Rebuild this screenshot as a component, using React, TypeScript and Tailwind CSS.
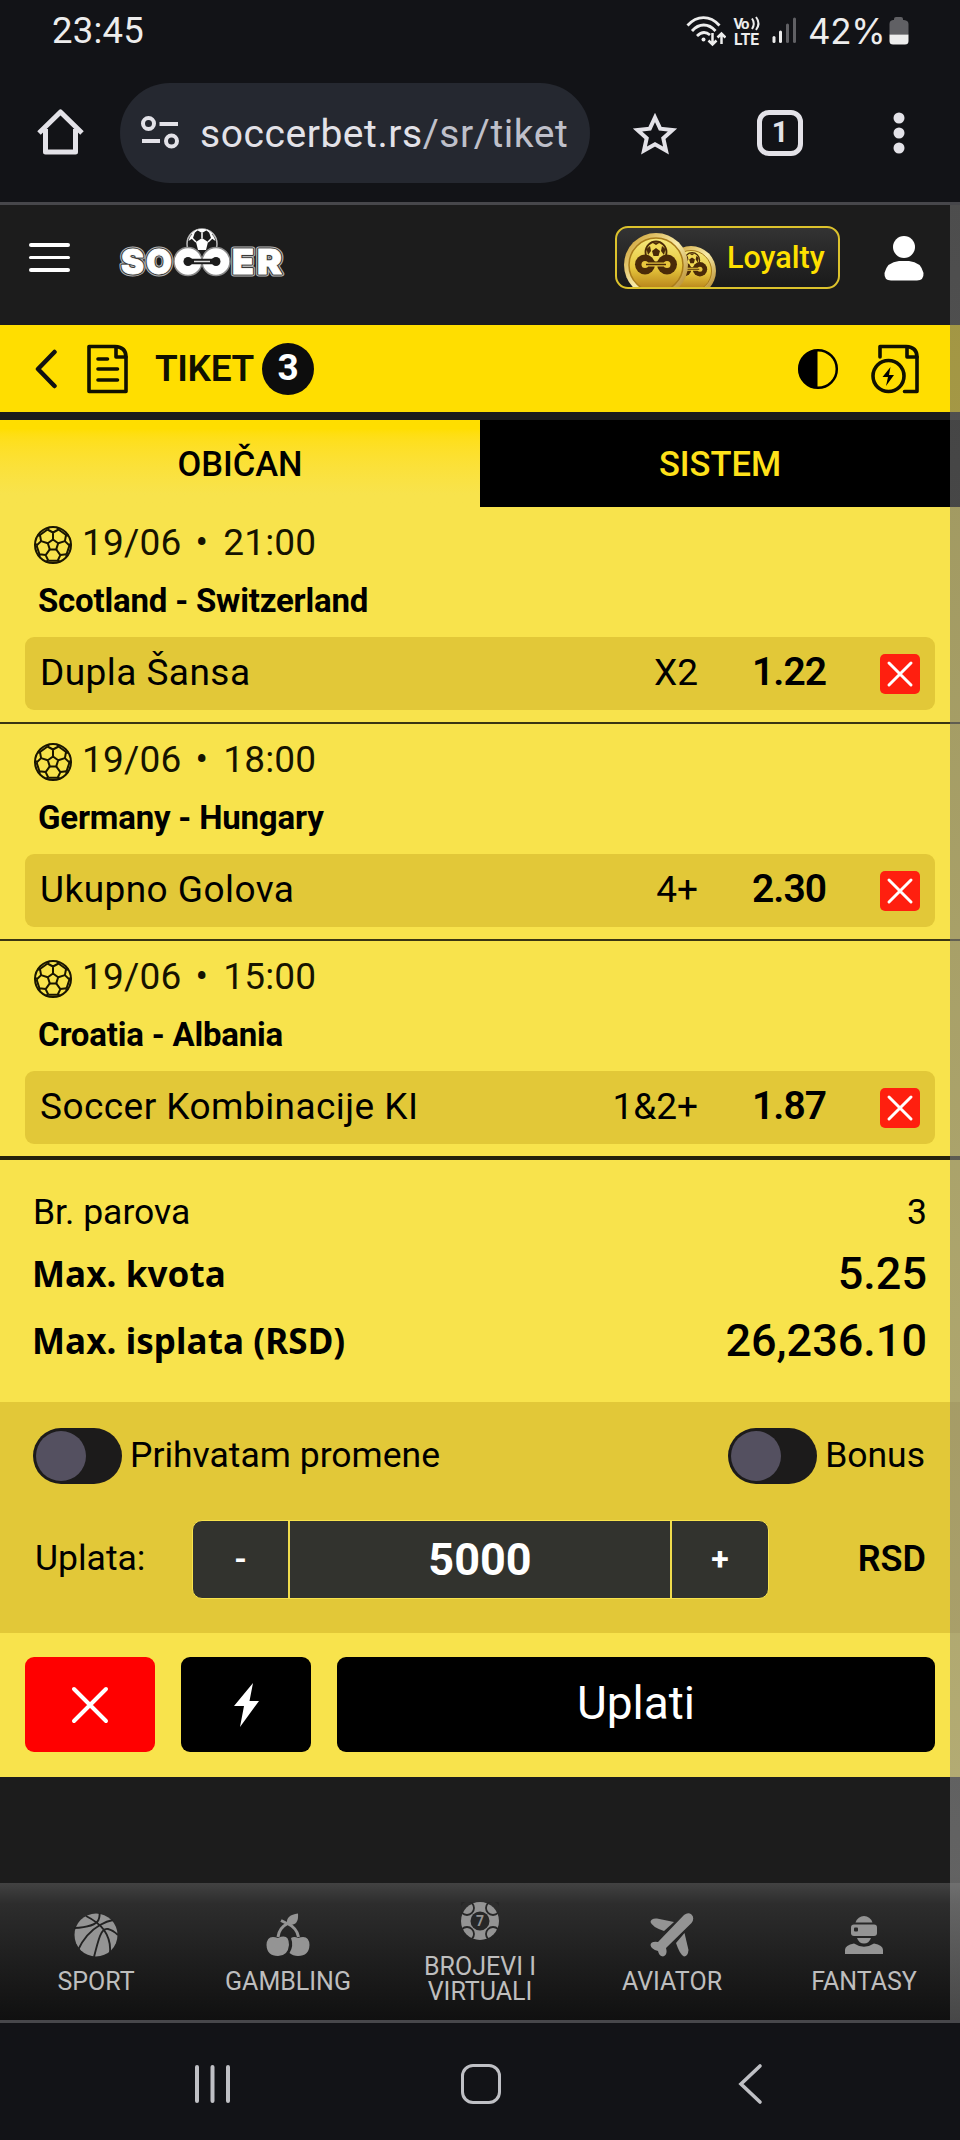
import { useState } from 'react';
import type { ReactNode } from 'react';

interface Bet {
  id: number;
  date: string;
  time: string;
  match: string;
  market: string;
  pick: string;
  odd: string;
}

const bets: Bet[] = [
  { id: 1, date: '19/06', time: '21:00', match: 'Scotland - Switzerland', market: 'Dupla Šansa', pick: 'X2', odd: '1.22' },
  { id: 2, date: '19/06', time: '18:00', match: 'Germany - Hungary', market: 'Ukupno Golova', pick: '4+', odd: '2.30' },
  { id: 3, date: '19/06', time: '15:00', match: 'Croatia - Albania', market: 'Soccer Kombinacije KI', pick: '1&2+', odd: '1.87' },
];

function StatusBar() {
  return (
    <div className="flex h-[62px] items-center justify-between pl-[52px] pr-[51px] text-[#ededed]">
      <span className="text-[36.5px] leading-none tracking-[0.2px]">23:45</span>
      <div className="flex items-center">
        <svg width="40" height="32" viewBox="0 0 40 32" fill="none" stroke="#ededed" strokeWidth="2.8">
          <path d="M1.5 10.5C11 0 24 0 33.5 10.5" />
          <path d="M6 16C13 8 22.5 8 29.5 16" />
          <path d="M11 21C15.5 16.5 20 16.5 24 20" />
          <circle cx="17.5" cy="24.500" r="2" fill="#ededed" stroke="none" />
          <path d="M26.5 18V29M22.5 25.5L26.5 29.5L30.5 25.5M35.5 29V19M31.5 22.5L35.5 18.5L39.5 22.5" strokeWidth="2.5" />
        </svg>
        <svg className="ml-[7px] overflow-visible" width="28" height="36" viewBox="0 0 28 36" fill="#ededed" fontFamily="Roboto, sans-serif" fontWeight="700">
          <text x="0.5" y="16" fontSize="15" textLength="16">Vo</text>
          <path d="M19 5.5Q22.5 10.500 19 16M23 4Q28 10.500 23 17" fill="none" stroke="#ededed" strokeWidth="2" />
          <text x="1" y="31.500" fontSize="16" textLength="25" lengthAdjust="spacingAndGlyphs">LTE</text>
        </svg>
        <svg className="ml-[11px]" width="26" height="28" viewBox="0 0 26 28">
          <rect x="0.5" y="19" width="3" height="7" rx="1.5" fill="#ededed" />
          <rect x="7" y="13.5" width="3" height="12.5" rx="1.5" fill="#ededed" />
          <rect x="14" y="6.5" width="3" height="19.5" rx="1.5" fill="#606064" />
          <rect x="21" y="0.5" width="3" height="25.5" rx="1.5" fill="#606064" />
        </svg>
        <span className="ml-[10px] w-[79px] whitespace-nowrap font-['Inter'] text-[35px] leading-none tracking-[-0.4px]">42%</span>
        <svg className="ml-[2px]" width="20" height="28" viewBox="0 0 20 28">
          <path d="M5 3V2Q5 0 7 0H12Q14 0 14 2V3H15Q19.5 3.5 19.5 7V17.5H0.5V7Q0.5 3.5 4 3Z" fill="#606064" />
          <path d="M0.5 17.5H19.5V24Q19.5 27.5 16 27.5H4Q0.5 27.5 0.5 24Z" fill="#ededed" />
        </svg>
      </div>
    </div>
  );
}

function BrowserBar() {
  return (
    <div className="flex h-[140px] items-center pl-[36px] pt-px text-[#e3e2e8]">
      <svg className="mb-[3px]" width="48" height="48" viewBox="0 0 48 48" fill="none" stroke="#e3e2e8" strokeWidth="5" strokeLinejoin="round">
        <path d="M3 26L24.5 5L46 26" />
        <path d="M9.5 22V45H39.5V22" />
      </svg>
      <div className="ml-[36px] flex h-[100px] w-[470px] items-center rounded-full bg-[#252830] pl-[21px]">
        <svg width="38" height="34" viewBox="0 0 38 34" fill="none" stroke="#e3e2e8" strokeWidth="4">
          <circle cx="7.5" cy="7.5" r="5.5" />
          <path d="M18.5 8H37" />
          <path d="M1 25H19" />
          <circle cx="30.5" cy="25" r="5.5" />
        </svg>
        <span className="ml-[21px] mt-[4px] whitespace-nowrap text-[39px] leading-none tracking-[0.55px]">
          soccerbet.rs<span className="text-[#bfc0ca]">/sr/tiket</span>
        </span>
      </div>
      <svg className="ml-[42px] mt-[3px]" width="46" height="44" viewBox="0 0 46 44" fill="none" stroke="#e3e2e8" strokeWidth="4">
        <path d="M23 5.5L28.2 16.7L40.5 18L31.3 26.3L34 38.5L23 32.2L12 38.5L14.7 26.3L5.5 18L17.8 16.7Z" />
      </svg>
      <div className="ml-[79px] flex h-[46px] w-[46px] items-center justify-center rounded-[12px] border-[5px] border-[#e3e2e8] text-[29px] font-bold leading-none">
        1
      </div>
      <svg className="ml-[90px]" width="12" height="44" viewBox="0 0 12 44" fill="#e3e2e8">
        <circle cx="6" cy="7" r="5.5" />
        <circle cx="6" cy="22" r="5.5" />
        <circle cx="6" cy="37" r="5.5" />
      </svg>
    </div>
  );
}

function Logo() {
  const letters = (
    <>
      <text x="7" y="49" textLength="23" lengthAdjust="spacingAndGlyphs">S</text>
      <text x="32" y="49" textLength="26" lengthAdjust="spacingAndGlyphs">O</text>
      <text x="118" y="49" textLength="22" lengthAdjust="spacingAndGlyphs">E</text>
      <text x="143" y="49" textLength="25" lengthAdjust="spacingAndGlyphs">R</text>
    </>
  );
  return (
    <svg className="mb-[9px] ml-[44px]" width="176" height="56" viewBox="0 0 176 56" fontFamily="Inter, sans-serif" fontWeight="900" fontSize="34">
      <circle cx="88" cy="19" r="15" fill="#1c1c1c" stroke="#bdbdbd" strokeWidth="1.5" />
      <path d="M88 13L94 17L92 25H84L82 17ZM83 5L88 8L93 5L90 4H86ZM74.5 16L79 13L81 7Q76 10 74.5 16ZM101.5 16L97 13L95 7Q100 10 101.5 16Z" fill="#fff" />
      <path d="M88 8V13M82 17L78 13M94 17L98 13M83 5L78 9M93 5L98 9" stroke="#fff" strokeWidth="1.5" />
      <g fill="#b5b5b5" stroke="#b5b5b5" strokeWidth="5" strokeLinejoin="round">{letters}</g>
      <g fill="#3a3a3a" stroke="#3a3a3a" strokeWidth="3" strokeLinejoin="round">{letters}</g>
      <g fill="#fff" stroke="#fff" strokeWidth="0.8">{letters}</g>
      <g fill="#fff" stroke="#8a8a8a" strokeWidth="1.5">
        <circle cx="74" cy="36.5" r="14" />
        <circle cx="102" cy="36.5" r="14" />
      </g>
      <circle cx="74" cy="36.5" r="4.5" fill="#1c1c1c" />
      <circle cx="102" cy="36.5" r="4.5" fill="#1c1c1c" />
      <path d="M74 36.5H102" stroke="#1c1c1c" strokeWidth="5.5" />
      <path d="M80 36.5H96" stroke="#ddd" strokeWidth="1.5" />
    </svg>
  );
}

function CoinMark() {
  return (
    <>
      <circle cx="32" cy="24" r="10.5" fill="#f0d955" stroke="#4a2a08" strokeWidth="1.8" />
      <path d="M32 20L36 23L34.5 28H29.5L28 23ZM22.5 21L26 18L27 23L24 27ZM41.5 21L38 18L37 23L40 27ZM28 14.5H36L32 17Z" fill="#4a2a08" />
      <circle cx="21" cy="36.5" r="10" fill="#4a2a08" />
      <circle cx="43" cy="36.5" r="10" fill="#4a2a08" />
      <circle cx="21" cy="36.5" r="3.5" fill="#e8c63e" />
      <circle cx="43" cy="36.5" r="3.5" fill="#e8c63e" />
      <path d="M21 36.5H43" stroke="#e8c63e" strokeWidth="4" />
      <path d="M22 36.5H42" stroke="#4a2a08" strokeWidth="1.3" />
    </>
  );
}

function Coins() {
  return (
    <svg width="96" height="59" viewBox="0 0 96 59">
      <defs>
        <linearGradient id="rim" x1="0" y1="0" x2="1" y2="1">
          <stop offset="0" stopColor="#c79522" />
          <stop offset="0.5" stopColor="#f8ecaa" />
          <stop offset="1" stopColor="#a8740e" />
        </linearGradient>
        <linearGradient id="face" x1="0" y1="0" x2="0" y2="1">
          <stop offset="0" stopColor="#f6e97c" />
          <stop offset="0.55" stopColor="#e6c63c" />
          <stop offset="1" stopColor="#b07814" />
        </linearGradient>
      </defs>
      <circle cx="67" cy="43" r="25" fill="url(#rim)" />
      <circle cx="67" cy="43" r="20.5" fill="url(#face)" stroke="#a97c1a" strokeWidth="1" />
      <g transform="translate(45 15) scale(0.72)">
        <CoinMark />
      </g>
      <circle cx="32" cy="37" r="32" fill="url(#rim)" />
      <circle cx="32" cy="37" r="27" fill="url(#face)" stroke="#a97c1a" strokeWidth="1.5" />
      <CoinMark />
    </svg>
  );
}

function Header() {
  return (
    <header className="flex h-[120px] items-center bg-[#1c1c1c] pb-[15px] pl-[29px] pr-[36px]">
      <button className="flex flex-col gap-[9px]">
        <span className="h-[3.5px] w-[41px] rounded-full bg-white" />
        <span className="h-[3.5px] w-[41px] rounded-full bg-white" />
        <span className="h-[3.5px] w-[41px] rounded-full bg-white" />
      </button>
      <Logo />
      <button className="ml-auto flex h-[63px] w-[225px] items-center overflow-hidden rounded-[13px] border-2 border-[#dcc22c] bg-linear-to-b from-[#333333] to-[#1a1a1a] pl-[7px]">
        <Coins />
        <span className="ml-[7px] mt-[2px] text-[30.5px] font-medium leading-none text-[#ffe000]">Loyalty</span>
      </button>
      <svg className="ml-[44px]" width="40" height="46" viewBox="0 0 40 46" fill="#fff">
        <circle cx="20" cy="12" r="11" />
        <path d="M15 26H25Q37 27 39.5 38Q40 45.5 33 45.5H7Q0 45.5 0.5 38Q3 27 15 26Z" />
      </svg>
    </header>
  );
}

function TicketBar() {
  return (
    <div className="flex h-[87px] items-center bg-[#ffde00] pl-[34px] pr-[40px]">
      <svg width="24" height="40" viewBox="0 0 24 40" fill="none" stroke="#111" strokeWidth="4.5" strokeLinecap="round" strokeLinejoin="round">
        <path d="M20.5 3L4 20L20.5 37" />
      </svg>
      <svg className="ml-[28px]" width="43" height="50" viewBox="0 0 43 50" fill="none" stroke="#111100" strokeWidth="3.6" strokeLinecap="round" strokeLinejoin="round">
        <path d="M3 2.5H29Q40 3 40 13V47.5H3Z" />
        <path d="M30 3V13H40M12 15H21.5M12 25H31.5M12 36H31.5" />
      </svg>
      <span className="ml-[26px] w-[99px] text-[37px] font-semibold leading-none tracking-[-0.4px] text-[#111100]">TIKET</span>
      <span className="ml-[8px] flex h-[52px] w-[52px] items-center justify-center rounded-full bg-[#0d0d0d] pb-[2px] text-[37px] font-bold leading-none text-white">
        {bets.length}
      </span>
      <svg className="ml-auto" width="42" height="42" viewBox="0 0 42 42">
        <circle cx="21" cy="21" r="18.8" fill="none" stroke="#000" strokeWidth="2.5" />
        <path d="M20.5 2A19 19 0 0 0 20.5 40Z" fill="#000" />
      </svg>
      <svg className="ml-[31px]" width="50" height="50" viewBox="0 0 50 50" fill="none" stroke="#111100" strokeWidth="3.6" strokeLinecap="round" strokeLinejoin="round">
        <path d="M10 13V2.5H36Q47 3 47 13V47.5H34.5" />
        <path d="M37 3V13H47" />
        <circle cx="18.5" cy="32" r="15.5" />
        <path d="M20.5 23L12.5 33H18L16 42L24 31H19Z" fill="#000" stroke="none" />
      </svg>
    </div>
  );
}

function BallIcon() {
  return (
    <svg className="mt-[5px]" width="40" height="40" viewBox="0 0 40 40" fill="none" stroke="#1a1600" strokeWidth="2" strokeLinejoin="round">
      <circle cx="20" cy="20" r="18" />
      <path d="M20 14.5L25.2 18.3L23.2 24.4H16.8L14.8 18.3Z" />
      {[0, 72, 144, 216, 288].map((angle) => (
        <path
          key={angle}
          transform={`rotate(${angle} 20 20)`}
          d="M20 14.5V7.5M14.5 4.500L20 7.5L25.5 4.500L33.100 10M25.5 4.500L24 2.5M14.5 4.500L16 2.5"
        />
      ))}
    </svg>
  );
}

function BetRow({ bet, last, onRemove }: { bet: Bet; last: boolean; onRemove: () => void }) {
  return (
    <div className={`px-[25px] pt-[11px] ${last ? 'h-[219px] border-b-4 border-[#25220a]' : 'h-[217px] border-b-2 border-[#3a3512]'}`}>
      <div className="flex h-[48px] items-center pl-[8px] text-[37px] leading-none tracking-[0.2px] text-[#161300]">
        <BallIcon />
        <span className="ml-[9px]">{bet.date}</span>
        <span className="ml-[14px] mr-[15px]">•</span>
        <span>{bet.time}</span>
      </div>
      <div className="mt-[10px] flex h-[48px] items-center pl-[13px] text-[33px] font-bold leading-none tracking-[-0.2px]">{bet.match}</div>
      <div className="mt-[13px] flex h-[73px] items-center rounded-[9px] bg-[#e2c838] pl-[15px] pr-[15px] text-[37px] leading-none">
        <span className="mb-[2px] grow tracking-[0.45px]">{bet.market}</span>
        <span className="mb-[2px]">{bet.pick}</span>
        <span className="mb-[2px] w-[129px] pr-px text-right text-[39px] font-semibold tracking-[-1px]">{bet.odd}</span>
        <button onClick={onRemove} className="ml-[53px] flex h-[40px] w-[40px] items-center justify-center rounded-[5px] bg-[#ff1f0f]">
          <svg width="28" height="28" viewBox="0 0 28 28" stroke="#fff" strokeWidth="3" strokeLinecap="round">
            <path d="M3 3L25 25M25 3L3 25" />
          </svg>
        </button>
      </div>
    </div>
  );
}

function Toggle({ label }: { label: string }) {
  const [on, setOn] = useState(false);
  return (
    <label className="flex items-center text-[35.5px] leading-none">
      <button
        onClick={() => setOn(!on)}
        className={`mr-[8px] flex h-[56px] w-[89px] items-center rounded-full bg-[#1c1b1b] px-[3px] ${on ? 'justify-end' : 'justify-start'}`}
      >
        <span className="h-[50px] w-[50px] rounded-full bg-[#545060]" />
      </button>
      {label}
    </label>
  );
}

function NavItem({ label, children }: { label: ReactNode; children: ReactNode }) {
  return (
    <div className="flex w-[192px] flex-col items-center justify-center pt-[3px] text-center text-[25px] leading-[25px] text-[#bebebe]">
      {children}
      {label}
    </div>
  );
}

function BottomNav() {
  return (
    <nav className="flex h-[137px] bg-linear-to-b from-[#424242] via-[#2d2d2d] via-15% to-[#101010]">
      <NavItem label="SPORT">
        <svg className="mb-[12px]" width="44" height="44" viewBox="0 0 44 44" fill="none" stroke="#222" strokeWidth="1.9">
          <circle cx="22" cy="22" r="21.5" fill="#949494" stroke="none" />
          <path d="M12 3Q24 9 30 17Q37 27 36 39M0 15Q21 14 24.5 7Q26 3 25.5 0M4 37Q12 20 26 12Q33 8 39 7M20 44Q24 28 26 23Q29 15 34 16Q39 17 44 22" />
        </svg>
      </NavItem>
      <NavItem label="GAMBLING">
        <svg className="mb-[12px]" width="44" height="44" viewBox="0 0 44 44" fill="#949494">
          <path d="M12 24Q13 15 21.5 10.5Q31 15 32.5 24M15 7.5L22 11" fill="none" stroke="#949494" strokeWidth="3" />
          <path d="M21 10Q20 2 32 0.5Q33 12 24 12Z" />
          <path d="M12 25Q23 20 23 32Q22 43 12 43Q1 43 0.5 32Q1 21 12 25Z" />
          <path d="M25 25Q28 33 23.5 40Q27 43 32 43Q43 43 43.5 32Q43 21 32 25Q28 23 25 25Z" />
        </svg>
      </NavItem>
      <NavItem label={<>BROJEVI I<br />VIRTUALI</>}>
        <svg className="mb-[14px]" width="38" height="38" viewBox="0 0 38 38">
          <circle cx="19" cy="19" r="19" fill="#949494" />
          <circle cx="19" cy="19" r="9.5" fill="#272727" />
          <g fill="none" stroke="#272727" strokeWidth="1.8">
            <circle cx="6" cy="6" r="7" />
            <circle cx="32" cy="6" r="7" />
            <circle cx="6" cy="32" r="7" />
            <circle cx="32" cy="32" r="7" />
          </g>
          <text x="19" y="24" fontSize="14" fontWeight="700" textAnchor="middle" fill="#949494">7</text>
        </svg>
      </NavItem>
      <NavItem label="AVIATOR">
        <svg className="mb-[12px]" width="44" height="44" viewBox="0 0 44 44" fill="#949494">
          <path d="M34 2Q38 -1 41.5 1.5Q45 5 41.5 10L16 35Q18 42 13 43.5Q9 43 8 38Q1 36 0.5 32Q1 28 8 29Z" />
          <path d="M24 9L14 18Q2 14 0.5 9Q1 5 7 5.5Z" />
          <path d="M34.5 20L26 30Q30 42 34 43.5Q38 43 38.5 37Z" />
        </svg>
      </NavItem>
      <NavItem label="FANTASY">
        <svg className="mb-[12px]" width="40" height="44" viewBox="0 0 40 44" fill="#949494">
          <path d="M11.5 9.5Q14 3 20 3Q26 3 28.5 9.5Z" />
          <rect x="7" y="11.5" width="26" height="11.5" rx="3" />
          <rect x="10" y="14.5" width="4" height="4" rx="1" fill="#272727" />
          <path d="M13 25H27Q25 30.5 20 30.5Q15 30.5 13 25Z" />
          <path d="M10 30.5Q20 37 30 30.5Q39 32 39 37V41H1V37Q1 32 10 30.5Z" />
        </svg>
      </NavItem>
    </nav>
  );
}

function SystemNav() {
  return (
    <div className="flex h-[120px] items-center border-t-[3px] border-[#47474b] pl-[194px] pt-[4px]">
      <svg width="38" height="40" viewBox="0 0 38 40" stroke="#bfc0c5" strokeWidth="4" strokeLinecap="round">
        <path d="M3 3V37M18.5 3V37M34 3V37" />
      </svg>
      <div className="ml-[229px] h-[40px] w-[40px] rounded-[12px] border-[3.5px] border-[#bfc0c5]" />
      <svg className="ml-[237px]" width="26" height="42" viewBox="0 0 26 42" fill="none" stroke="#bfc0c5" strokeWidth="3.6" strokeLinecap="round">
        <path d="M22 3L3 21L22 39" />
      </svg>
    </div>
  );
}

export default function App() {
  const [items, setItems] = useState(bets);
  const [stake, setStake] = useState(5000);

  return (
    <div className="h-[2140px] w-[960px] overflow-hidden bg-[#121317] font-['Roboto'] text-black">
      <StatusBar />
      <BrowserBar />
      <div className="relative">
        <div className="h-[3px] bg-[#47474b]" />
        <Header />
        <TicketBar />
        <div className="h-[8px] bg-[#1c1c1c]" />

        <div className="bg-[#f8e34c]">
          <div className="flex h-[87px] bg-linear-to-b from-[#ffde00] from-10% to-[#f8e34c] to-85% text-[34.5px] font-medium leading-none">
            <button className="flex-1 pt-[2px]">OBIČAN</button>
            <button className="flex-1 bg-black pt-[2px] text-[#ffe11a]">SISTEM</button>
          </div>

          {items.map((bet, i) => (
            <BetRow
              key={bet.id}
              bet={bet}
              last={i === items.length - 1}
              onRemove={() => setItems(items.filter((item) => item.id !== bet.id))}
            />
          ))}

          <div className="flex h-[242px] flex-col pl-[33px] pr-[33px] pt-[28px]">
            <div className="flex h-[50px] items-center justify-between text-[35.5px] leading-none">
              <span>Br. parova</span>
              <span>3</span>
            </div>
            <div className="mt-[9px] flex h-[52px] items-center justify-between leading-none">
              <span className="-ml-px font-['Noto_Sans'] text-[35px] font-bold tracking-[0.1px]">Max. kvota</span>
              <span className="text-[45px] font-medium">5.25</span>
            </div>
            <div className="mt-[15px] flex h-[52px] items-center justify-between leading-none">
              <span className="-ml-px font-['Noto_Sans'] text-[35px] font-bold tracking-[0.1px]">Max. isplata (RSD)</span>
              <span className="text-[45px] font-medium">26,236.10</span>
            </div>
          </div>

          <div className="h-[231px] bg-[#e2c838] pt-[26px]">
            <div className="flex justify-between pl-[33px] pr-[35px]">
              <Toggle label="Prihvatam promene" />
              <Toggle label="Bonus" />
            </div>
            <div className="mt-[36px] flex h-[78px] items-center pl-[35px] pr-[34px] text-[35.5px] leading-none">
              <span className="w-[157px]">Uplata:</span>
              <div className="flex h-[79px] w-[577px] items-stretch overflow-hidden rounded-[10px] border border-[#f8e34c] bg-[#32332e] font-bold text-white">
                <button className="w-[95px] text-[32px]" onClick={() => setStake(stake - 50)}>-</button>
                <div className="flex flex-1 items-center justify-center border-x-2 border-[#f0dc4c] text-[45px]">{stake}</div>
                <button className="w-[96px] text-[32px]" onClick={() => setStake(stake + 50)}>+</button>
              </div>
              <span className="ml-auto text-[36px] font-semibold">RSD</span>
            </div>
          </div>

          <div className="flex h-[144px] gap-[26px] pl-[25px] pr-[25px] pt-[24px]">
            <button onClick={() => setItems([])} className="flex h-[95px] w-[130px] items-center justify-center rounded-[9px] bg-[#ff0000]">
              <svg width="40" height="40" viewBox="0 0 40 40" stroke="#fff" strokeWidth="4" strokeLinecap="round">
                <path d="M4 4L36 36M36 4L4 36" />
              </svg>
            </button>
            <button className="flex h-[95px] w-[130px] items-center justify-center rounded-[9px] bg-black">
              <svg width="26" height="44" viewBox="0 0 26 44" fill="#fff">
                <path d="M20 0L1 23H11L7 44L26 18H16.5Z" />
              </svg>
            </button>
            <button className="h-[95px] flex-1 rounded-[9px] bg-black pb-[3px] text-[46px] leading-none text-white">Uplati</button>
          </div>
        </div>

        <div className="h-[106px] bg-[#1c1c1c]" />
        <BottomNav />
        <div className="absolute bottom-0 right-0 top-[3px] w-[10px] bg-linear-to-b from-[#6a6a6a]/63 via-[#8c8c8c]/63 via-92% to-[#686868]/63" />
      </div>
      <SystemNav />
    </div>
  );
}
